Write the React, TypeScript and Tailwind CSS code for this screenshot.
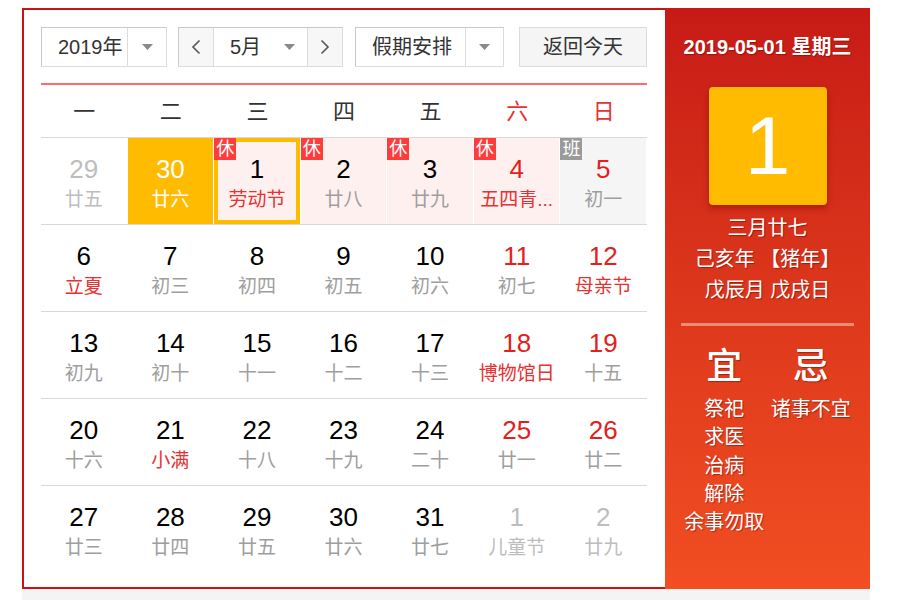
import React from 'react';

type Day = {
  n: number;
  l: string;
  other?: boolean;
  red?: boolean;
  lred?: boolean;
  badge?: '休' | '班';
  hol?: boolean;
  work?: boolean;
  today?: boolean;
  sel?: boolean;
};

const rows: Day[][] = [
  [
    { n: 29, l: '廿五', other: true },
    { n: 30, l: '廿六', today: true },
    { n: 1, l: '劳动节', lred: true, badge: '休', hol: true, sel: true },
    { n: 2, l: '廿八', badge: '休', hol: true },
    { n: 3, l: '廿九', badge: '休', hol: true },
    { n: 4, l: '五四青...', red: true, lred: true, badge: '休', hol: true },
    { n: 5, l: '初一', red: true, badge: '班', work: true },
  ],
  [
    { n: 6, l: '立夏', lred: true },
    { n: 7, l: '初三' },
    { n: 8, l: '初四' },
    { n: 9, l: '初五' },
    { n: 10, l: '初六' },
    { n: 11, l: '初七', red: true },
    { n: 12, l: '母亲节', red: true, lred: true },
  ],
  [
    { n: 13, l: '初九' },
    { n: 14, l: '初十' },
    { n: 15, l: '十一' },
    { n: 16, l: '十二' },
    { n: 17, l: '十三' },
    { n: 18, l: '博物馆日', red: true, lred: true },
    { n: 19, l: '十五', red: true },
  ],
  [
    { n: 20, l: '十六' },
    { n: 21, l: '小满', lred: true },
    { n: 22, l: '十八' },
    { n: 23, l: '十九' },
    { n: 24, l: '二十' },
    { n: 25, l: '廿一', red: true },
    { n: 26, l: '廿二', red: true },
  ],
  [
    { n: 27, l: '廿三' },
    { n: 28, l: '廿四' },
    { n: 29, l: '廿五' },
    { n: 30, l: '廿六' },
    { n: 31, l: '廿七' },
    { n: 1, l: '儿童节', other: true },
    { n: 2, l: '廿九', other: true },
  ],
];

const weekdays = ['一', '二', '三', '四', '五', '六', '日'];

function Caret() {
  return (
    <svg width="11" height="6" viewBox="0 0 11 6">
      <polygon points="0,0 11,0 5.5,6" fill="#8a8a8a" />
    </svg>
  );
}

function Chevron({ dir }: { dir: 'l' | 'r' }) {
  return (
    <svg width="10" height="16" viewBox="0 0 10 16">
      <polyline
        points={dir === 'l' ? '8.5,1.5 2,8 8.5,14.5' : '1.5,1.5 8,8 1.5,14.5'}
        fill="none"
        stroke="#555"
        strokeWidth="1.6"
      />
    </svg>
  );
}

function Cell({ d }: { d: Day }) {
  const bg = d.today
    ? 'bg-[#ffbb00]'
    : d.hol
    ? 'bg-[#fff0f0]'
    : d.work
    ? 'bg-[#f5f5f5]'
    : '';
  const numColor = d.today
    ? 'text-white'
    : d.other
    ? 'text-[#bdbdbd]'
    : d.red
    ? 'text-[#e3201c]'
    : 'text-black';
  const lunColor = d.today
    ? 'text-white'
    : d.other
    ? 'text-[#bdbdbd]'
    : d.lred
    ? 'text-[#e63232]'
    : 'text-[#9e9e9e]';
  return (
    <div className="h-[86px] pr-[1px]">
      <div
        className={`relative flex h-full flex-col items-center pt-[16px] ${bg} ${
          d.sel ? 'shadow-[inset_0_0_0_4px_#ffbb00]' : ''
        }`}
      >
        {d.badge && (
          <span
            className={`absolute left-0 top-0 flex h-[22px] w-[22px] items-center justify-center text-[18px] leading-[22px] text-white ${
              d.badge === '休' ? 'bg-[#ff3b3b]' : 'bg-[#9a9a9a]'
            }`}
          >
            {d.badge}
          </span>
        )}
        <div className={`text-[26px] leading-[30px] ${numColor}`}>{d.n}</div>
        <div className={`mt-[4px] whitespace-nowrap text-[19px] leading-[24px] ${lunColor}`}>
          {d.l}
        </div>
      </div>
    </div>
  );
}

export default function App() {
  return (
    <div className="h-[600px] w-[900px] bg-white [font-family:'Liberation_Sans','Noto_Sans_CJK_SC',sans-serif]">
      <div className="ml-[22px] w-[848px] pt-[8px]">
        <div className="flex">
          {/* left panel */}
          <div className="w-[643px] border-b-2 border-l-2 border-t-2 border-[#cc1111] pb-[15px] pl-[17px] pr-[18px] pt-[17px]">
            {/* controls */}
            <div className="flex h-[40px] text-[20px] text-[#333]">
              <div className="flex w-[126px] border border-[#c8c8c8] border-b-[#dcdcdc] border-r-[#dcdcdc] bg-white">
                <div className="flex w-[86px] items-center border-r border-[#dcdcdc] pl-[16px]">2019年</div>
                <div className="flex flex-1 items-center justify-center">
                  <Caret />
                </div>
              </div>
              <div className="ml-[11px] flex w-[165px] border border-[#c8c8c8] border-b-[#dcdcdc] border-r-[#dcdcdc] bg-white">
                <div className="flex w-[35px] items-center justify-center border-r border-[#dcdcdc] bg-[#f7f7f7]">
                  <Chevron dir="l" />
                </div>
                <div className="flex flex-1 items-center pl-[16px]">
                  <span>5月</span>
                  <span className="ml-[23px] flex items-center">
                    <Caret />
                  </span>
                </div>
                <div className="flex w-[35px] items-center justify-center border-l border-[#dcdcdc] bg-[#f7f7f7]">
                  <Chevron dir="r" />
                </div>
              </div>
              <div className="ml-[12px] flex w-[149px] border border-[#c8c8c8] border-b-[#dcdcdc] border-r-[#dcdcdc] bg-white">
                <div className="flex w-[110px] items-center border-r border-[#dcdcdc] pl-[16px]">假期安排</div>
                <div className="flex flex-1 items-center justify-center">
                  <Caret />
                </div>
              </div>
              <button className="ml-auto flex w-[128px] items-center justify-center border border-[#dcdcdc] bg-[#f5f5f5] text-[#333]">
                返回今天
              </button>
            </div>

            <div className="mt-[16px] h-[2px] bg-[#ff6b6b]" />

            {/* weekday header */}
            <div className="grid h-[52px] grid-cols-7 items-center text-center text-[22px]">
              {weekdays.map((w, i) => (
                <div key={w} className={i >= 5 ? 'text-[#e63232]' : 'text-[#333]'}>
                  {w}
                </div>
              ))}
            </div>

            {/* day rows */}
            {rows.map((r, ri) => (
              <div key={ri} className="grid grid-cols-7 border-t border-[#d8d8d8]">
                {r.map((d, di) => (
                  <Cell key={di} d={d} />
                ))}
              </div>
            ))}
          </div>

          {/* right panel */}
          <div className="flex w-[205px] flex-col items-center bg-linear-to-b from-[#c71a16] to-[#f24e22] pt-[27px] text-white [text-shadow:1px_1px_1px_rgba(90,0,0,0.45)]">
            <div className="text-[20px] font-bold leading-[24px]">2019-05-01 星期三</div>
            <div className="mt-[28px] flex h-[118px] w-[118px] items-center justify-center rounded-[4px] bg-[#ffbb00] text-[82px] leading-none shadow-[0_3px_6px_rgba(120,0,0,0.45)] [text-shadow:none]">
              1
            </div>
            <div className="mt-[8px] text-center text-[20px] leading-[31px]">
              <div>三月廿七</div>
              <div>己亥年 【猪年】</div>
              <div>戊辰月 戊戌日</div>
            </div>
            <div className="mt-[17px] h-[3px] w-[173px] bg-[#f08a78]" />
            <div className="mt-[21px] grid w-[173px] grid-cols-2 text-center">
              <div className="flex flex-col items-center">
                <div className="text-[36px] font-medium leading-[40px]">宜</div>
                <div className="mt-[8px] text-[20px] leading-[28.3px]">
                  <div>祭祀</div>
                  <div>求医</div>
                  <div>治病</div>
                  <div>解除</div>
                  <div>余事勿取</div>
                </div>
              </div>
              <div className="flex flex-col items-center">
                <div className="text-[36px] font-medium leading-[40px]">忌</div>
                <div className="mt-[8px] text-[20px] leading-[28.3px]">
                  <div>诸事不宜</div>
                </div>
              </div>
            </div>
          </div>
        </div>
        <div className="h-[11px] bg-[#f4f4f4]" />
      </div>
    </div>
  );
}
